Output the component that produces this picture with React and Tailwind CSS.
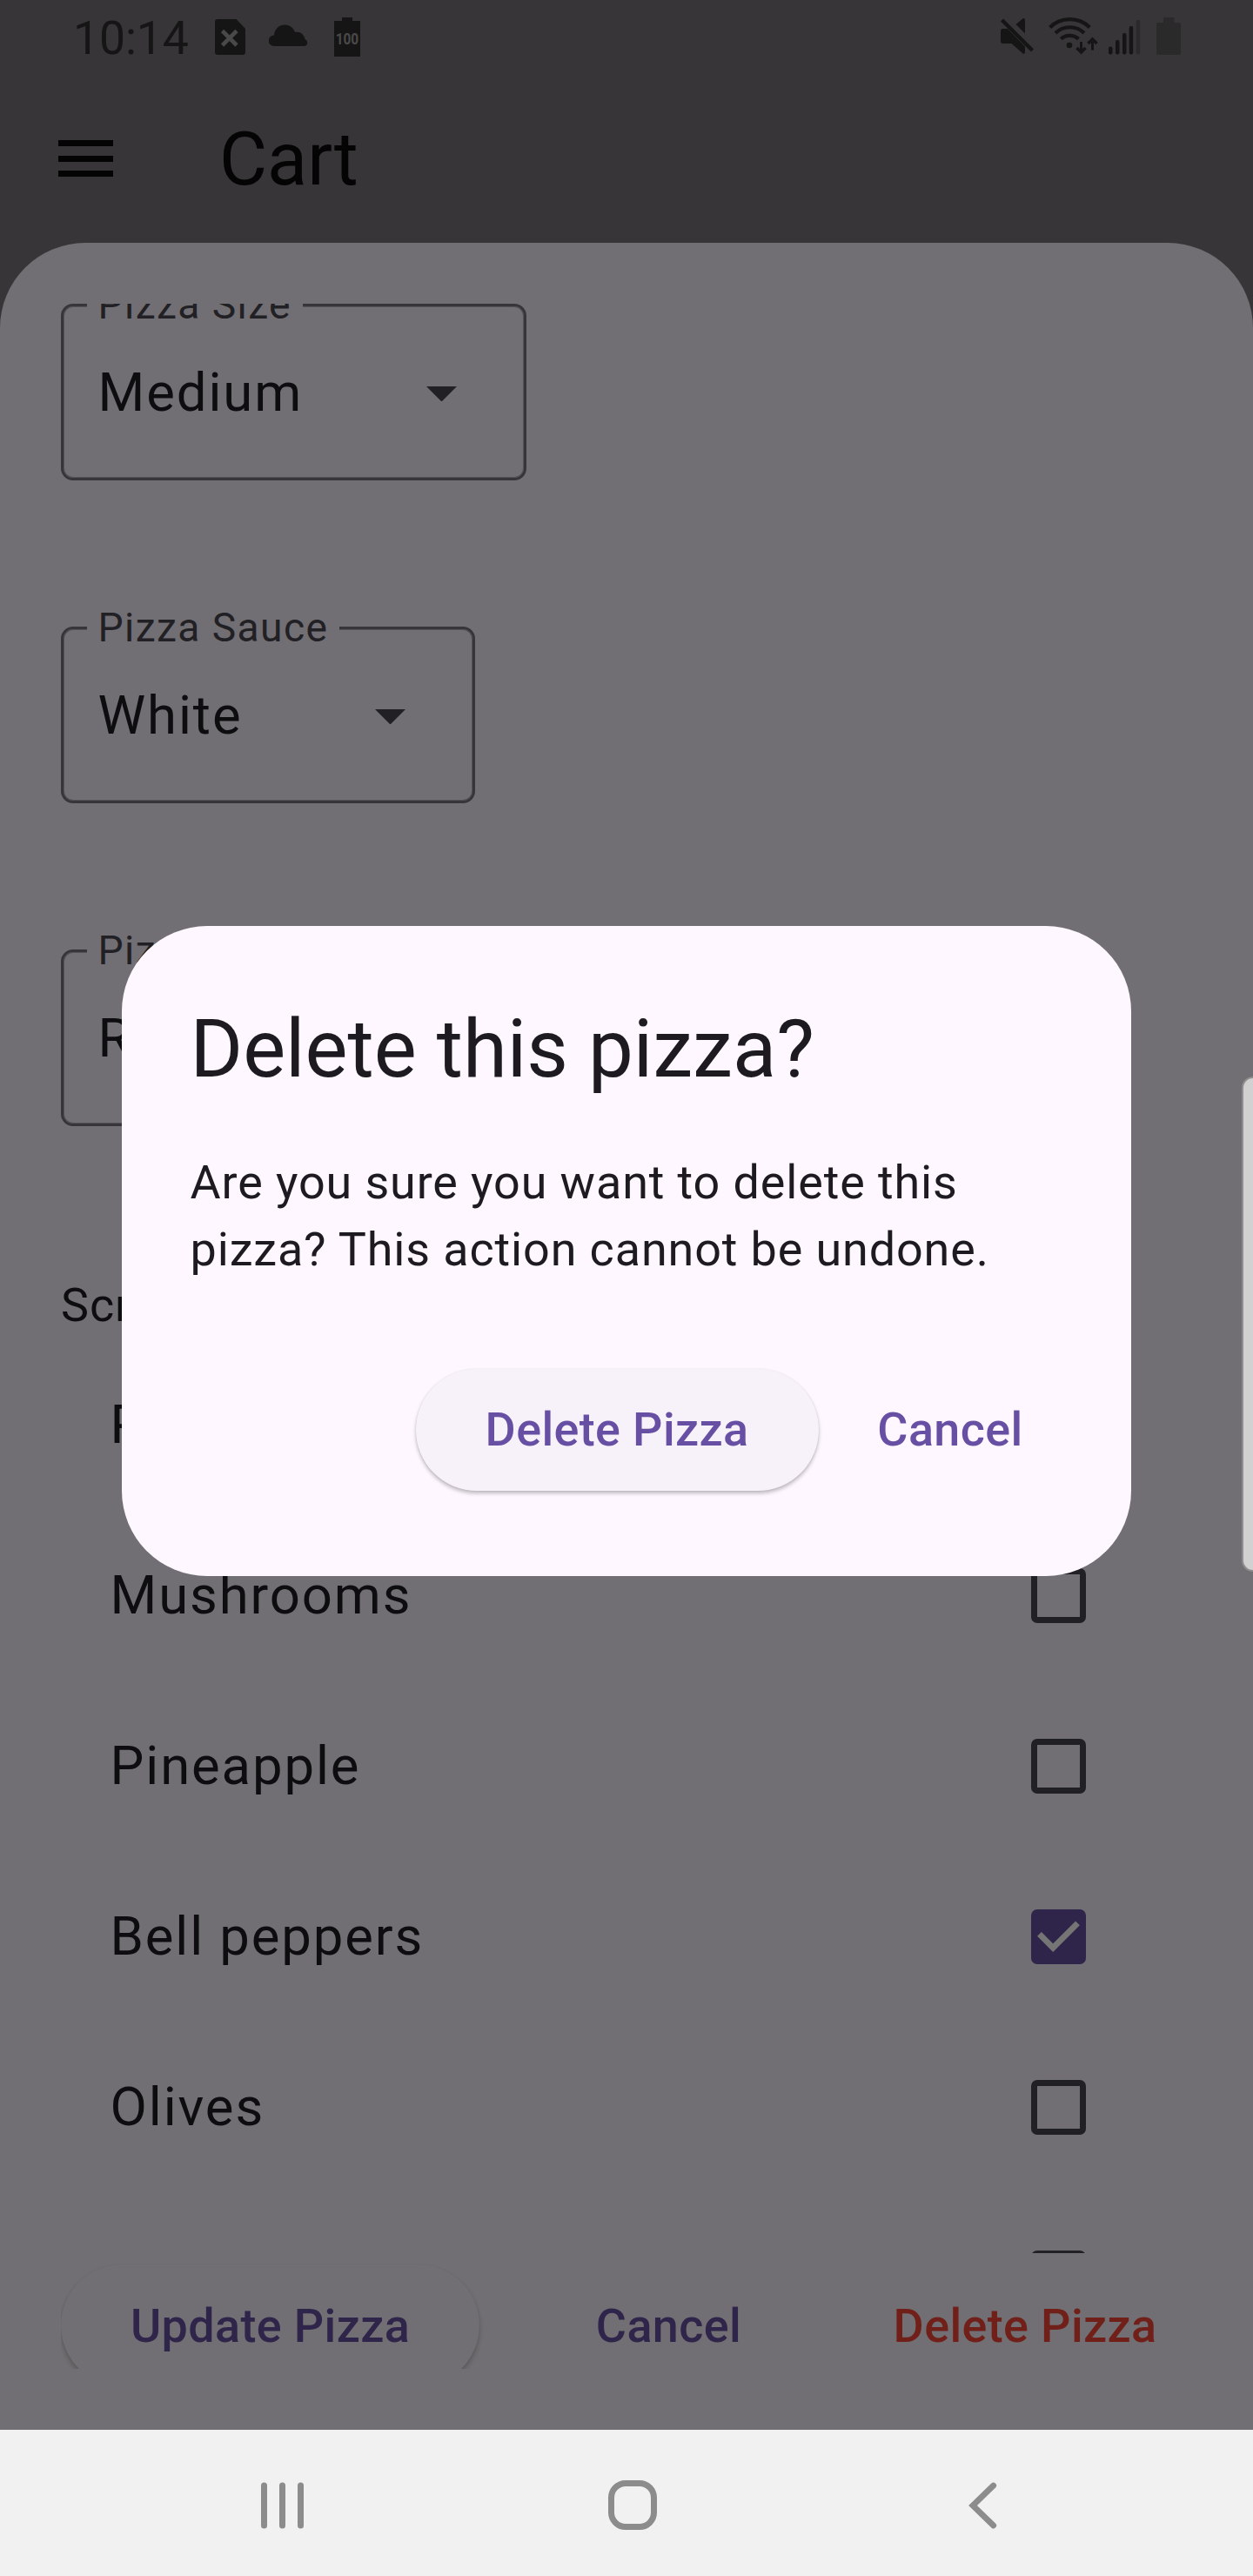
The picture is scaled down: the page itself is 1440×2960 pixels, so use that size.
import React from "react";

function StatusBar() {
  return (
    <div className="flex h-[86px] w-full shrink-0 items-start text-[#151515]">
      <span className="mt-[12px] ml-[84px] w-[163px] shrink-0 text-[53.5px] leading-[64px] tracking-[-0.1px] whitespace-nowrap">10:14</span>
      <svg className="mt-[22px] h-[41px] w-[35px] shrink-0" viewBox="0 0 35 41" fill="none">
        <path d="M3 0H24.500L35 11V38A3 3 0 0 1 32 41H3A3 3 0 0 1 0 38V3A3 3 0 0 1 3 0Z" fill="#151515" />
        <path d="M8.500 13.500L25 30M25 13.500L8.500 30" stroke="#4a494a" strokeWidth="4.600" />
      </svg>
      <svg className="mt-[28px] ml-[27px] h-[25px] w-[45px] shrink-0" viewBox="0 0 45 25" fill="#151515">
        <path d="M6 25A6 6 0 0 1 6 12.500C6.500 5 12 .5 18.500 .5C24 .5 28 4 30 9C35 7.500 40.500 11 41.500 17A4.200 4.200 0 0 1 41 25Z" />
      </svg>
      <svg className="mt-[20px] ml-[30px] h-[45px] w-[30px] shrink-0" viewBox="0 0 30 45">
        <path d="M9 0H21V4H30V45H0V4H9Z" fill="#151515" />
        <text x="1.700" y="31" fontSize="17.800" fontWeight="700" textLength="26.500" lengthAdjust="spacingAndGlyphs" fill="#4a494a">100</text>
      </svg>
      <svg className="mt-[20px] ml-[735px] h-[43px] w-[40px] shrink-0" viewBox="0 0 40 43" fill="#151515">
        <path d="M1 15.500Q1 13 3.500 13H9L29 33.500V40.500Q28.500 42.500 26.500 41.500L13.500 30H3.500Q1 30 1 27.500Z" />
        <path d="M18.500 8L26.500 1.300Q28.500 .3 29 2.500V18.500Z" />
        <path d="M2.500 3L37.500 38" stroke="#151515" strokeWidth="4.500" />
      </svg>
      <svg className="mt-[20px] ml-[16px] h-[43px] w-[57px] shrink-0" viewBox="0 0 57 43" fill="none" stroke="#151515" strokeWidth="4.200">
        <path d="M1.700 11.500C14 -1 35 -1 47.300 11.500M8 18C17 9 32 9 41 18M14.500 24.800C19.500 19.500 29 19.500 34.500 24.800" />
        <circle cx="24" cy="32" r="3.300" fill="#151515" stroke="none" />
        <path d="M37.500 28V38M50.500 37.500V28" strokeWidth="3" />
        <path d="M32.500 35L37.500 40L42.500 35M45.500 30L50.500 25L55.500 30" strokeWidth="3.500" />
      </svg>
      <svg className="mt-[22px] ml-[12px] h-[41px] w-[37px] shrink-0" viewBox="0 0 37 41" fill="#151515">
        <rect x="0" y="31.500" width="4.500" height="9" rx="2" />
        <rect x="8" y="24" width="4.500" height="16.500" rx="2" />
        <rect x="16" y="16" width="4.500" height="24.500" rx="2" />
        <rect x="23.700" y="8" width="4.500" height="32.500" rx="2" />
        <rect x="31.700" y="1" width="4.500" height="39.500" rx="2" fill="#2a2a2a" />
      </svg>
      <svg className="mt-[20px] ml-[18px] h-[43px] w-[28px] shrink-0" viewBox="0 0 28 43">
        <path d="M8 0H20.500V6H26Q28 6 28 8V41Q28 43 26 43H2Q0 43 0 41V8Q0 6 2 6H8Z" fill="#2a2a2a" />
      </svg>
    </div>
  );
}

function AppBar() {
  return (
    <div className="flex h-[193px] w-full shrink-0 items-start">
      <div className="mt-[75px] ml-[67px] flex w-[63px] flex-col gap-[10.5px]">
        <span className="h-[7px] bg-[#040404]" />
        <span className="h-[7px] bg-[#040404]" />
        <span className="h-[7px] bg-[#040404]" />
      </div>
      <h1 className="mt-[47px] ml-[122px] text-[84.7px] leading-[100px] text-[#040404]">Cart</h1>
    </div>
  );
}

function SelectField({ label, value, className }) {
  return (
    <div className={"relative flex h-[203px] shrink-0 items-center justify-between rounded-[14px] border-[3px] border-[#37353a] pr-[77px] pl-[39.5px] shadow-[inset_0_0_0_1px_rgba(55,53,58,0.5)] " + className}>
      <span className="absolute top-[-26px] left-[27px] bg-[#716f73] pr-[13px] pl-[12.5px] text-[46.2px] leading-[48px] tracking-[1.4px] whitespace-nowrap text-[#212024]">{label}</span>
      <span className="text-[61.6px] leading-[92px] tracking-[1.925px] text-[#0d0c0f]">{value}</span>
      <svg className="mt-[4px] h-[17.5px] w-[35px]" viewBox="0 0 35 17.5">
        <path d="M0 0H35L17.500 17.500Z" fill="#212024" />
      </svg>
    </div>
  );
}

function Topping({ name, checked }) {
  return (
    <div className="flex h-[196px] shrink-0 items-center justify-between pr-[122.5px] pl-[56.5px]">
      <span className="text-[61.6px] leading-[92px] tracking-[1.9px] text-[#0d0c0f]">{name}</span>
      {checked ? (
        <svg className="h-[63px] w-[63px] rounded-[7px] bg-[#2f254b]" viewBox="0 0 63 63" fill="none">
          <path d="M9.500 28.400L25.200 44.100L53.500 15.800" stroke="#757575" strokeWidth="6.800" />
        </svg>
      ) : (
        <span className="h-[63px] w-[63px] rounded-[7px] border-[7px] border-[#212024]" />
      )}
    </div>
  );
}

const toppings = [
  { id: 1, name: "Pepperoni" },
  { id: 2, name: "Mushrooms" },
  { id: 3, name: "Pineapple" },
  { id: 4, name: "Bell peppers", checked: true },
  { id: 5, name: "Olives" },
  { id: 6, name: "" },
];

function PizzaSheet() {
  return (
    <div className="flex h-[2513px] w-full shrink-0 flex-col rounded-t-[98px] bg-[#716f73] px-[70px] pt-[70px]">
      <div className="flex h-[2240px] shrink-0 flex-col overflow-hidden">
        <div className="flex flex-col items-start gap-[168px]">
          <SelectField label="Pizza Size" value="Medium" className="w-[535px]" />
          <SelectField label="Pizza Sauce" value="White" className="w-[476px]" />
          <SelectField label="Pizza Crust" value="Regular" className="w-[546px]" />
        </div>
        <p className="mt-[167px] mb-px shrink-0 text-[53.9px] leading-[77px] tracking-[0.9px] text-[#0d0c0f]">Scroll for toppings</p>
        {toppings.map((t) => (
          <Topping key={t.id} name={t.name} checked={t.checked} />
        ))}
      </div>
      <div className="flex h-[133px] shrink-0 items-start overflow-hidden pt-[13px] text-[53.9px] font-medium tracking-[0.385px] whitespace-nowrap">
        <button className="h-[140px] w-[481px] shrink-0 rounded-full pt-[2px] text-[#2f254b] shadow-[0_4px_5px_rgba(40,30,30,0.28),0_0_1px_rgba(90,80,80,0.2)]">Update Pizza</button>
        <button className="ml-[92px] h-[140px] w-[251px] shrink-0 pt-[2px] text-[#2f254b]">Cancel</button>
        <button className="ml-[92px] h-[140px] w-[384px] shrink-0 pt-[2px] text-[#701f19]">Delete Pizza</button>
      </div>
    </div>
  );
}

function DeleteDialog() {
  return (
    <div role="dialog" className="absolute top-[1064.3px] left-[140px] flex h-[747.2px] w-[1160px] flex-col rounded-[98px] bg-[#fef7ff] pt-[80px] pr-[82.5px] pl-[78.5px] text-[#1d1b20]">
      <h2 className="text-[92.4px] leading-[123px] whitespace-nowrap">Delete this pizza?</h2>
      <p className="mt-[53px] text-[53.9px] leading-[77px] tracking-[0.89px] whitespace-nowrap">
        Are you sure you want to delete this
        <br />
        pizza? This action cannot be undone.
      </p>
      <div className="mt-[99px] flex justify-end text-[53.9px] font-medium tracking-[0.385px] whitespace-nowrap text-[#6750a4]">
        <button className="h-[140px] w-[463px] rounded-full bg-[#f7f2fa] shadow-[0_3px_4px_rgba(0,0,0,0.25),0_0_2px_rgba(0,0,0,0.08)]">Delete Pizza</button>
        <button className="ml-[26px] h-[140px] w-[251px]">Cancel</button>
      </div>
    </div>
  );
}

function NavBar() {
  return (
    <div className="flex h-[168px] w-full shrink-0 items-start bg-[#f1f1f1] pt-[58px]">
      <svg className="mt-[1.5px] ml-[300px] h-[54px] w-[49px]" viewBox="0 0 49 54" fill="#8c8c8c">
        <rect x="0" y="0.500" width="7" height="53" rx="3.500" />
        <rect x="21" y="0.500" width="7" height="53" rx="3.500" />
        <rect x="42" y="0.500" width="7" height="53" rx="3.500" />
      </svg>
      <span className="ml-[350px] h-[57px] w-[56px] rounded-[20px] border-[7px] border-[#8c8c8c]" />
      <svg className="mt-[1.5px] ml-[358px] h-[54px] w-[34px]" viewBox="0 0 34 54" fill="none">
        <path d="M28.700 4L5 27L28.700 50" stroke="#8c8c8c" strokeWidth="6.800" strokeLinecap="round" />
      </svg>
    </div>
  );
}

export default function App() {
  return (
    <div className="relative flex h-[2960px] w-[1440px] flex-col overflow-hidden bg-[#373537] font-['Roboto',sans-serif]">
      <StatusBar />
      <AppBar />
      <PizzaSheet />
      <NavBar />
      <DeleteDialog />
      <div className="absolute top-[1237px] right-0 h-[569px] w-[13px] rounded-l-[13px] border-[2px] border-r-0 border-[#8e8e8e] bg-[#d1d1d1]" />
    </div>
  );
}
